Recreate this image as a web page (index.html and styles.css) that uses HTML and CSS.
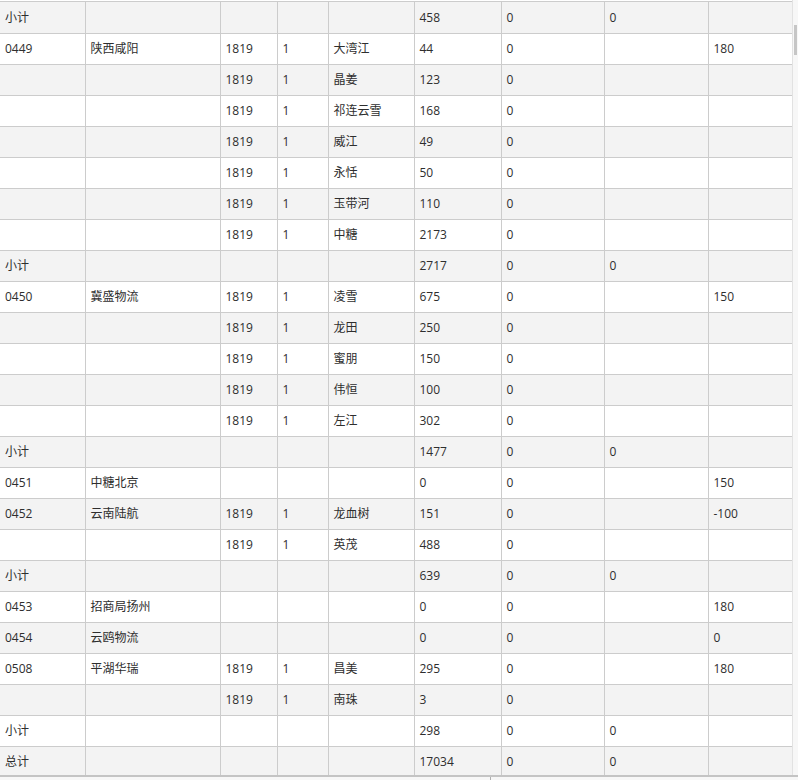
FILE: index.html
```html
<!DOCTYPE html>
<html lang="zh">
<head>
<meta charset="utf-8">
<link rel="stylesheet" href="styles.css">
</head>
<body>
<div class="frame">
  <div class="viewport">
    <div class="scroller">
      <table class="grid">
        <colgroup>
          <col class="c1"><col class="c2"><col class="c3"><col class="c4"><col class="c5"><col class="c6"><col class="c7"><col class="c8"><col class="c9">
        </colgroup>
        <tbody>
          <tr><td>小计</td><td></td><td></td><td></td><td></td><td>458</td><td>0</td><td>0</td><td></td></tr>
          <tr><td>0449</td><td>陕西咸阳</td><td>1819</td><td>1</td><td>大湾江</td><td>44</td><td>0</td><td></td><td>180</td></tr>
          <tr><td></td><td></td><td>1819</td><td>1</td><td>晶姜</td><td>123</td><td>0</td><td></td><td></td></tr>
          <tr><td></td><td></td><td>1819</td><td>1</td><td>祁连云雪</td><td>168</td><td>0</td><td></td><td></td></tr>
          <tr><td></td><td></td><td>1819</td><td>1</td><td>威江</td><td>49</td><td>0</td><td></td><td></td></tr>
          <tr><td></td><td></td><td>1819</td><td>1</td><td>永恬</td><td>50</td><td>0</td><td></td><td></td></tr>
          <tr><td></td><td></td><td>1819</td><td>1</td><td>玉带河</td><td>110</td><td>0</td><td></td><td></td></tr>
          <tr><td></td><td></td><td>1819</td><td>1</td><td>中糖</td><td>2173</td><td>0</td><td></td><td></td></tr>
          <tr><td>小计</td><td></td><td></td><td></td><td></td><td>2717</td><td>0</td><td>0</td><td></td></tr>
          <tr><td>0450</td><td>冀盛物流</td><td>1819</td><td>1</td><td>凌雪</td><td>675</td><td>0</td><td></td><td>150</td></tr>
          <tr><td></td><td></td><td>1819</td><td>1</td><td>龙田</td><td>250</td><td>0</td><td></td><td></td></tr>
          <tr><td></td><td></td><td>1819</td><td>1</td><td>蜜朋</td><td>150</td><td>0</td><td></td><td></td></tr>
          <tr><td></td><td></td><td>1819</td><td>1</td><td>伟恒</td><td>100</td><td>0</td><td></td><td></td></tr>
          <tr><td></td><td></td><td>1819</td><td>1</td><td>左江</td><td>302</td><td>0</td><td></td><td></td></tr>
          <tr><td>小计</td><td></td><td></td><td></td><td></td><td>1477</td><td>0</td><td>0</td><td></td></tr>
          <tr><td>0451</td><td>中糖北京</td><td></td><td></td><td></td><td>0</td><td>0</td><td></td><td>150</td></tr>
          <tr><td>0452</td><td>云南陆航</td><td>1819</td><td>1</td><td>龙血树</td><td>151</td><td>0</td><td></td><td>-100</td></tr>
          <tr><td></td><td></td><td>1819</td><td>1</td><td>英茂</td><td>488</td><td>0</td><td></td><td></td></tr>
          <tr><td>小计</td><td></td><td></td><td></td><td></td><td>639</td><td>0</td><td>0</td><td></td></tr>
          <tr><td>0453</td><td>招商局扬州</td><td></td><td></td><td></td><td>0</td><td>0</td><td></td><td>180</td></tr>
          <tr><td>0454</td><td>云鸥物流</td><td></td><td></td><td></td><td>0</td><td>0</td><td></td><td>0</td></tr>
          <tr><td>0508</td><td>平湖华瑞</td><td>1819</td><td>1</td><td>昌美</td><td>295</td><td>0</td><td></td><td>180</td></tr>
          <tr><td></td><td></td><td>1819</td><td>1</td><td>南珠</td><td>3</td><td>0</td><td></td><td></td></tr>
          <tr><td>小计</td><td></td><td></td><td></td><td></td><td>298</td><td>0</td><td>0</td><td></td></tr>
          <tr><td>总计</td><td></td><td></td><td></td><td></td><td>17034</td><td>0</td><td>0</td><td></td></tr>
        </tbody>
      </table>
    </div>
    <div class="vbar"><div class="vthumb"></div></div>
  </div>
  <div class="hbar"><div class="htick"></div></div>
</div>
</body>
</html>
```

FILE: styles.css
```css
html, body {
  margin: 0;
  padding: 0;
  background: #ffffff;
}

.frame {
  width: 798px;
  height: 780px;
  overflow: hidden;
  display: flex;
  flex-direction: column;
  background: #ffffff;
}

.viewport {
  display: flex;
  height: 777px;
  overflow: hidden;
}

.scroller {
  width: 793px;
  padding-top: 1px;
  overflow: hidden;
}

.grid {
  border-collapse: collapse;
  table-layout: fixed;
  width: 793px;
  font-family: "Open Sans", "Noto Sans CJK SC", sans-serif;
  font-size: 12px;
  color: #2e2e2e;
}

.c1 { width: 85px; }
.c2 { width: 135px; }
.c3 { width: 57px; }
.c4 { width: 51px; }
.c5 { width: 86px; }
.c6 { width: 87px; }
.c7 { width: 103px; }
.c8 { width: 104px; }
.c9 { width: 85px; }

.grid td {
  height: 30px;
  padding: 0 5px;
  border: 1px solid #cccccc;
  white-space: nowrap;
  overflow: hidden;
  vertical-align: middle;
  line-height: 16px;
}

.grid tr:first-child td {
  height: 31px;
}

.grid td:first-child {
  border-left: none;
}

.grid tr:nth-child(odd) td {
  background: #f3f3f3;
}

.grid tr:nth-child(even) td {
  background: #ffffff;
}

.vbar {
  width: 5px;
  border-left: 1px solid #e2e2e2;
  background: #f7f7f7;
  position: relative;
}

.vthumb {
  position: absolute;
  left: 1px;
  top: 25px;
  width: 3px;
  height: 30px;
  background: #c6c6c6;
}

.hbar {
  height: 3px;
  border-top: 2px solid #c4c4c4;
  background: #f7f7f7;
  position: relative;
}

.htick {
  position: absolute;
  left: 490px;
  top: 0;
  width: 1px;
  height: 3px;
  background: #b0b0b0;
}
```
